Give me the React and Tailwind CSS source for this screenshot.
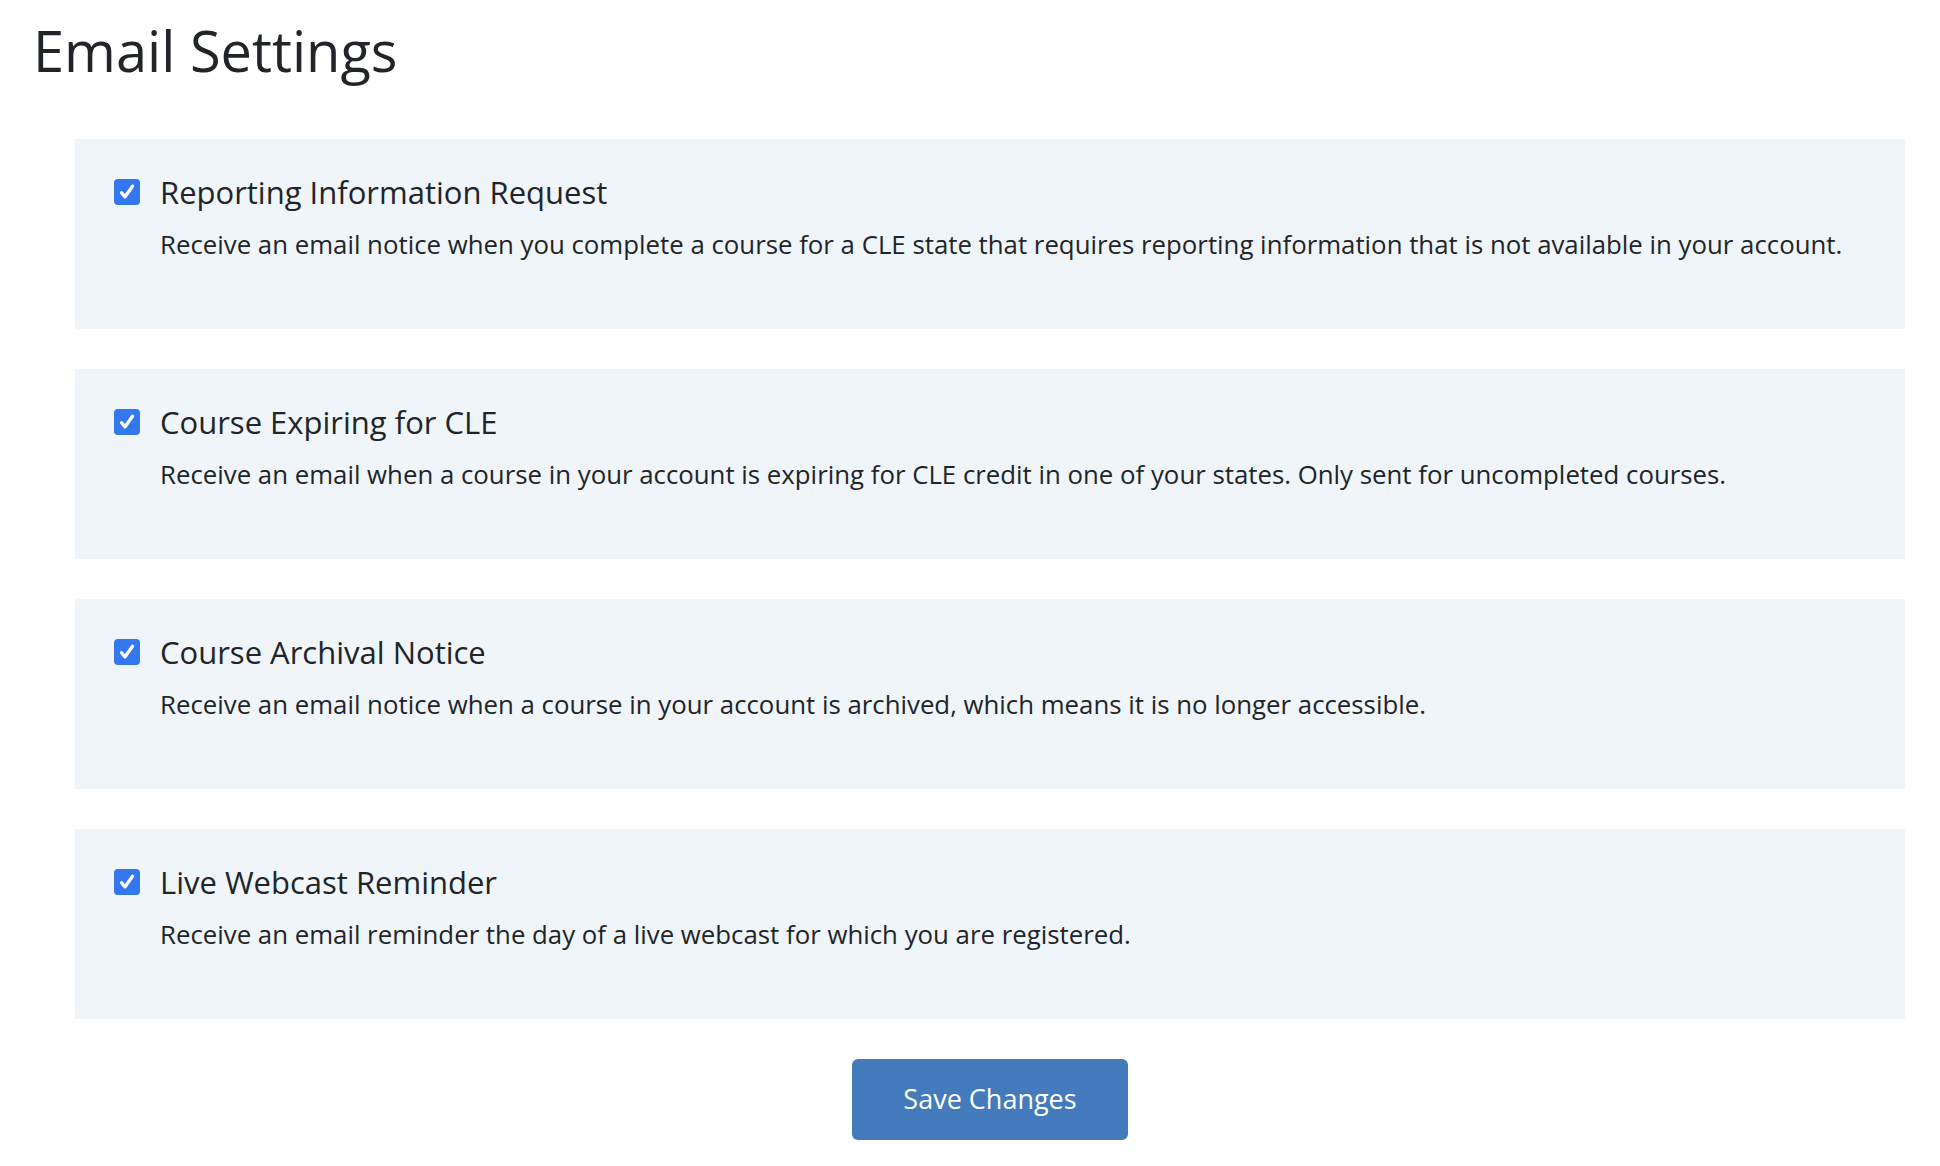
const items = [
  ["Reporting Information Request", "Receive an email notice when you complete a course for a CLE state that requires reporting information that is not available in your account."],
  ["Course Expiring for CLE", "Receive an email when a course in your account is expiring for CLE credit in one of your states. Only sent for uncompleted courses."],
  ["Course Archival Notice", "Receive an email notice when a course in your account is archived, which means it is no longer accessible."],
  ["Live Webcast Reminder", "Receive an email reminder the day of a live webcast for which you are registered."],
];

export default function App() {
  return (
    <div className="min-h-[1166px] bg-white text-[#212529]" style={{ fontFamily: '"Open Sans", sans-serif' }}>
      <h1 className="pl-[33px] pt-[12px] text-[56px] leading-[76px] font-normal">Email Settings</h1>
      <div className="ml-[75px] w-[1830px] mt-[51px] flex flex-col gap-[40px]">
        {items.map(([t, d]) => (
          <div key={t} className="h-[190px] bg-[#f0f5fa] pl-[39px] pt-[32px]">
            <div className="flex items-center gap-[20px]">
              <div className="w-[26px] h-[26px] rounded-[4px] bg-[#3478f0] flex items-center justify-center">
                <svg width="22" height="22" viewBox="0 0 16 16" fill="none" stroke="white" strokeWidth="2.4" strokeLinecap="round" strokeLinejoin="round">
                  <path d="M4 8.5l2.6 3L12 3.8" />
                </svg>
              </div>
              <div className="text-[31px] leading-[42px]">{t}</div>
            </div>
            <div className="ml-[46px] mt-[14px] text-[25.8px] leading-[34px]">{d}</div>
          </div>
        ))}
        <div className="flex justify-center">
          <button className="w-[276px] h-[81px] bg-[#437bbd] text-white text-[27px] rounded-[6px]">Save Changes</button>
        </div>
      </div>
    </div>
  );
}
